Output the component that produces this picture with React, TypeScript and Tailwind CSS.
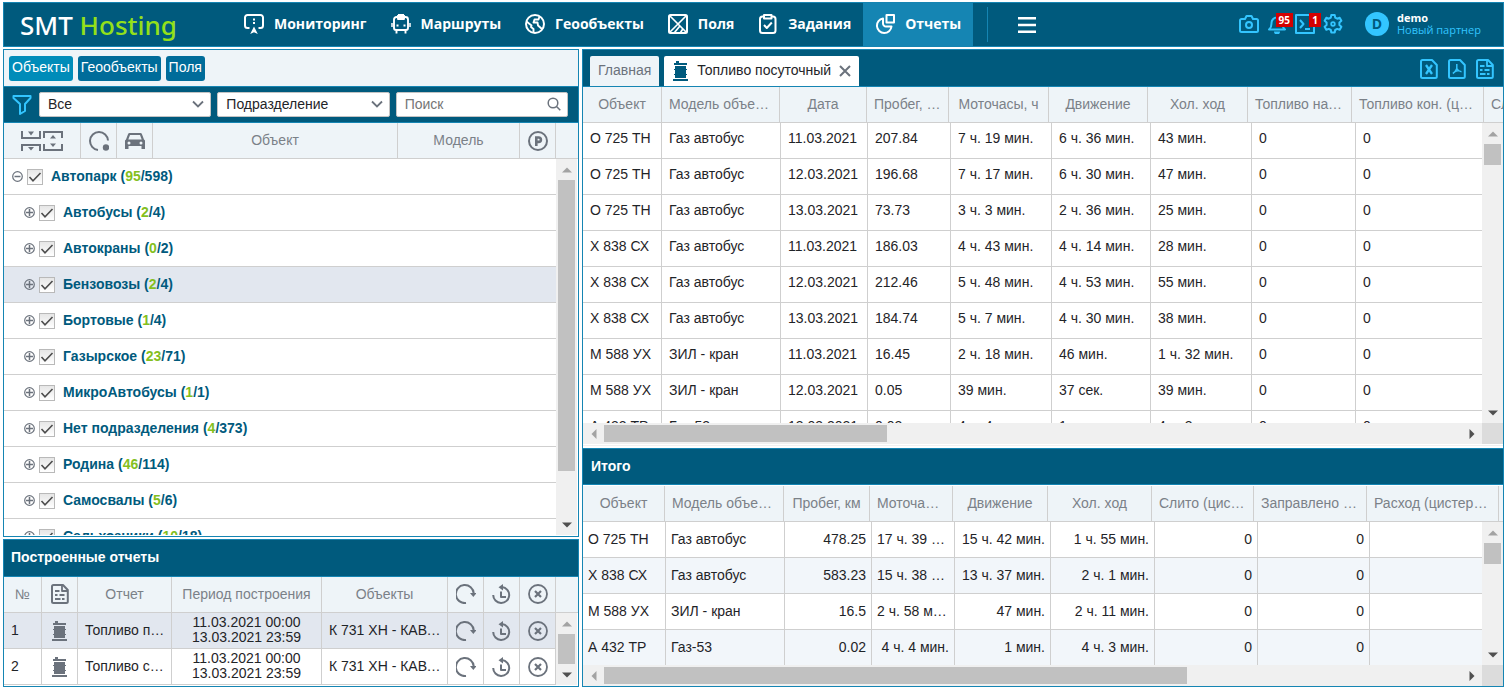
import type { ReactNode } from "react";

type IconProps = { className?: string };

function Svg({ className = "size-5", children }: { className?: string; children: ReactNode }) {
  return (
    <svg viewBox="0 0 20 20" className={`shrink-0 ${className}`} fill="none" stroke="currentColor" strokeWidth="2" strokeLinejoin="round" aria-hidden="true">
      {children}
    </svg>
  );
}

const MonitorIcon = () => (
  <Svg>
    <path d="M5.500 14H3.500A2.500 2.500 0 0 1 1 11.500V3.500A2.500 2.500 0 0 1 3.500 1h13A2.500 2.500 0 0 1 19 3.500v8a2.500 2.500 0 0 1-2.500 2.500h-2" />
    <path d="M10 4.500v2M10 8v2" />
    <path d="M10 12.500 13.800 20 10 18.300 6.200 20Z" fill="currentColor" stroke="none" />
  </Svg>
);
const BusIcon = () => (
  <Svg>
    <path d="M7 1h6M3 5.500A2.500 2.500 0 0 1 5.500 3h9A2.500 2.500 0 0 1 17 5.500V14a2 2 0 0 1-2 2H5a2 2 0 0 1-2-2ZM7 1v4h6V1M5.500 16v3.500M14.500 16v3.500" strokeWidth="1.900" />
    <path d="M1 9v4M19 9v4" strokeWidth="1.500" />
    <path d="M5.500 11.500h2M12.500 11.500h2" />
  </Svg>
);
const GlobeIcon = () => (
  <Svg>
    <circle cx="10" cy="10" r="9" />
    <path d="M1.500 7.500 6.500 11.500 6 13l2.500 2v3.500M14.500 2.500l-1 3h-4l-1 3h4l.5 3 4 3.500" strokeWidth="1.900" />
  </Svg>
);
const FieldIcon = () => (
  <Svg>
    <rect x="1" y="1" width="18" height="18" rx="1.500" />
    <path d="M2 2l16 16M18 2 2 18M6.500 18.500l5-6M12.500 18.500l2-3" strokeWidth="1.700" />
  </Svg>
);
const TaskIcon = () => (
  <Svg>
    <rect x="2" y="2.500" width="15.500" height="16.500" rx="2.500" />
    <path d="M6 1h7.500v3.500H6Z" fill="#005a7d" />
    <path d="m6 11 2.800 3 5-5.500" />
  </Svg>
);
const ReportsIcon = () => (
  <Svg>
    <path d="M8 4.500A7.300 7.300 0 1 0 16.500 12.500H11a3 3 0 0 1-3-3Z" />
    <path d="M11.500 1H19v7.500h-7.500Z" />
  </Svg>
);
const CameraIcon = () => (
  <Svg>
    <path d="M2.500 5H6l1.500-3h5L14 5h3.500A1.500 1.500 0 0 1 19 6.500v10a1.500 1.500 0 0 1-1.500 1.500h-15A1.500 1.500 0 0 1 1 16.500v-10A1.500 1.500 0 0 1 2.500 5Z" />
    <circle cx="10" cy="11" r="3" />
  </Svg>
);
const BellIcon = () => (
  <Svg>
    <path d="M2 15.500c2-1.500 2.500-3 2.500-6A5.500 5.500 0 0 1 10 3.500a5.500 5.500 0 0 1 5.500 6c0 3 .500 4.500 2.500 6Z" />
    <path d="M10 1v2" />
    <path d="M7 17.500h6a3 3 0 0 1-6 0Z" fill="currentColor" stroke="none" />
  </Svg>
);
const ConsoleIcon = () => (
  <Svg>
    <path d="M1 1h18v18H1Z" />
    <path d="m5 6 3.500 4L5 14M10 15h5" />
  </Svg>
);
const GearIcon = () => (
  <Svg>
    <path d="M8.300 1h3.400l.5 2.600 2 1.100 2.500-.9 1.700 3-2 1.700v2.600l2 1.700-1.700 3-2.500-.9-2 1.100-.5 2.600H8.300l-.5-2.600-2-1.100-2.500.9-1.700-3 2-1.700V8.500l-2-1.700 1.700-3 2.500.9 2-1.100Z" />
    <circle cx="10" cy="10" r="1.800" strokeWidth="1.800" />
  </Svg>
);
const PageIcon = ({ className, children }: { className?: string; children?: ReactNode }) => (
  <Svg className={className}>
    <path d="M3.500 1H13l4.800 5v11.500A1.500 1.500 0 0 1 16.300 19H3.500A1.500 1.500 0 0 1 2 17.500v-15A1.500 1.500 0 0 1 3.500 1Z" />
    {children}
  </Svg>
);
const ExcelIcon = () => (
  <PageIcon>
    <path d="m7 6 6 9M13 6l-6 9" strokeWidth="2.300" />
  </PageIcon>
);
const PdfIcon = () => (
  <PageIcon>
    <path d="M9.800 5v4.500c-.8 2.500-2 4-4 5M9.800 9.500c1 2 2.500 3 4.700 3.300M7.500 12.500l4-1" strokeWidth="1.500" />
  </PageIcon>
);
const DocIcon = ({ className }: IconProps) => (
  <PageIcon className={className}>
    <path d="M12 1.500V7h5.500M5 7h4.500M5 11h2.500M9.500 11h5M5 15h5.500M12 15h2.500" strokeWidth="1.800" />
  </PageIcon>
);
const FunnelIcon = () => (
  <Svg className="mr-px size-5 text-[#33c5ff]">
    <path d="M1.500 1h17v2L13 9v7l-5 3V9L1.500 3Z" />
  </Svg>
);
const BarrelIcon = ({ className }: IconProps) => (
  <svg viewBox="0 0 17 20" className={`h-5 w-[17px] shrink-0 ${className ?? ""}`} fill="currentColor" aria-hidden="true">
    <path d="M4 0h3v2h8v2H2V2h2ZM3 5h11v3h1v1h-1v4h1v1h-1v3H3v-3H2v-1h1V9H2V8h1ZM1 18h15v2H1Z" />
  </svg>
);
const TreeToggleIcon = () => (
  <svg viewBox="0 0 42 20" className="h-5 w-[42px]" fill="none" stroke="currentColor" strokeWidth="2" aria-hidden="true">
    <path d="M1 0v7h18V0M1 20v-6h18v6M23 7V1h18v6M23 13v6h18v-6" />
    <path d="M10 4.500 7 .5h6ZM10 19.500l-3-3.500h6ZM32 4l3 3.500h-6ZM32 16l3-3.500h-6Z" fill="currentColor" stroke="none" />
  </svg>
);
const StatusIcon = () => (
  <Svg>
    <path d="M9 19A9 9 0 1 1 19 9.500" />
    <circle cx="17" cy="16.500" r="3.200" fill="currentColor" stroke="none" />
  </Svg>
);
const CarIcon = () => (
  <svg viewBox="0 0 20 20" className="size-5" fill="currentColor" aria-hidden="true">
    <path fillRule="evenodd" d="M4.500 2h11a1.500 1.500 0 0 1 1.400 1L19 8.500l1 1V18h-3.500v-3h-13v3H0V9.500l1-1L3.100 3a1.500 1.500 0 0 1 1.400-1ZM5 4 3.300 8.500h13.400L15 4ZM4 10.500a1.500 1.500 0 1 0 0 3 1.500 1.500 0 0 0 0-3Zm12 0a1.500 1.500 0 1 0 0 3 1.500 1.500 0 0 0 0-3Z" />
  </svg>
);
const ParkingIcon = () => (
  <Svg>
    <circle cx="10" cy="10" r="9" />
    <path d="M8.300 15V6.500h2.400a2.200 2.200 0 0 1 0 4.400H8.300" strokeWidth="2.600" strokeLinejoin="miter" />
  </Svg>
);
const RepeatIcon = () => (
  <Svg>
    <path d="M10 19A9 9 0 1 1 17.800 9.500" />
    <path d="M14 9h6.500l-3.200 4Z" fill="currentColor" stroke="none" />
  </Svg>
);
const HistoryIcon = () => (
  <Svg>
    <path d="M10 3a8 8 0 1 1-8.800 8" />
    <path d="M11 0v6.500L6.500 3.200Z" fill="currentColor" stroke="none" />
    <path d="M9 7.500V13h5" />
  </Svg>
);
const RemoveIcon = () => (
  <Svg>
    <circle cx="10" cy="10" r="9" strokeWidth="1.800" />
    <path d="m7 7 6 6M13 7l-6 6" strokeWidth="2.200" />
  </Svg>
);

const navItems = [
  { label: "Мониторинг", icon: <MonitorIcon /> },
  { label: "Маршруты", icon: <BusIcon /> },
  { label: "Геообъекты", icon: <GlobeIcon /> },
  { label: "Поля", icon: <FieldIcon /> },
  { label: "Задания", icon: <TaskIcon /> },
  { label: "Отчеты", icon: <ReportsIcon />, active: true },
];

function Badge({ children }: { children: ReactNode }) {
  return (
    <span className="absolute -top-px -right-1.5 z-10 bg-[#d40000] px-[3px] font-['Open_Sans',sans-serif] text-[10px] leading-[14px] font-bold text-white">
      {children}
    </span>
  );
}

function Header() {
  return (
    <header className="flex h-[45px] shrink-0 items-stretch border border-[#1585b3] bg-[#005a7d] font-['Open_Sans','Noto_Sans',sans-serif] text-white">
      <a href="#" className="flex w-[228px] shrink-0 items-center pl-4 font-['Noto_Sans',sans-serif] text-[26px] leading-8 font-medium">
        <span>
          SMT <span className="text-[#93e01a]">Hosting</span>
        </span>
      </a>
      <nav className="flex items-stretch">
        {navItems.map((item) => (
          <a
            key={item.label}
            href="#"
            className={`flex items-center gap-[10px] px-3 pb-0.5 text-sm font-bold ${item.active ? "bg-[#1585b3]" : ""}`}
          >
            {item.icon}
            {item.label}
          </a>
        ))}
      </nav>
      <div className="mx-[14px] my-1 w-px bg-[#1585b3]" />
      <button type="button" aria-label="Меню" className="px-4">
        <svg viewBox="0 0 18 16" className="h-4 w-[18px]" stroke="currentColor" strokeWidth="2.400" aria-hidden="true">
          <path d="M0 1.200h18M0 8h18M0 14.800h18" />
        </svg>
      </button>
      <div className="ml-auto flex items-center gap-2 pr-[22px] pb-0.5 text-[#33c5ff]">
        <button type="button" aria-label="Снимок">
          <CameraIcon />
        </button>
        <button type="button" aria-label="Уведомления" className="relative">
          <BellIcon />
          <Badge>95</Badge>
        </button>
        <button type="button" aria-label="Команды" className="relative">
          <ConsoleIcon />
          <Badge>1</Badge>
        </button>
        <button type="button" aria-label="Настройки">
          <GearIcon />
        </button>
        <div className="ml-[14px] flex items-center gap-2">
          <span className="flex size-6 items-center justify-center rounded-full bg-[#33c5ff] text-sm font-bold text-[#005a7d]">D</span>
          <div className="text-[11px] leading-3">
            <div className="font-bold text-white">demo</div>
            <div>Новый партнер</div>
          </div>
        </div>
      </div>
    </header>
  );
}

const arrowRotation = { up: "", down: "rotate-180", left: "-rotate-90", right: "rotate-90" };

function Arrow({ dir, dim }: { dir: keyof typeof arrowRotation; dim?: boolean }) {
  return (
    <span className="flex size-[21px] shrink-0 items-center justify-center">
      <svg viewBox="0 0 10 6" className={`h-[6px] w-[10px] ${arrowRotation[dir]} ${dim ? "text-[#a3a3a3]" : "text-[#505050]"}`} fill="currentColor" aria-hidden="true">
        <path d="M5 0.500 10 5.500H0Z" />
      </svg>
    </span>
  );
}

function VScroll({ thumb }: { thumb: string }) {
  return (
    <div className="flex w-[21px] shrink-0 flex-col bg-[#f0f0f0]">
      <Arrow dir="up" dim />
      <div className="min-h-0 flex-1 px-0.5">
        <div className={`bg-[#c1c1c1] ${thumb}`} />
      </div>
      <Arrow dir="down" />
    </div>
  );
}

function HScroll({ thumb }: { thumb: string }) {
  return (
    <div className="flex h-[21px] shrink-0 bg-[#f0f0f0]">
      <Arrow dir="left" dim />
      <div className="flex-1 py-0.5">
        <div className={`h-[17px] bg-[#c1c1c1] ${thumb}`} />
      </div>
      <Arrow dir="right" />
      <div className="w-[21px] bg-[#dcdcdc]" />
    </div>
  );
}

const fieldClass = "block h-[25px] w-full appearance-none rounded-[2px] border border-[#c3c3c3] bg-white px-2 pb-0.5 text-sm leading-5 text-[#1f2428] placeholder:text-[#757575]";

function FilterSelect({ label, value }: { label: string; value: string }) {
  return (
    <div className="relative flex-1">
      <select aria-label={label} className={fieldClass} defaultValue={value}>
        <option>{value}</option>
      </select>
      <svg viewBox="0 0 12 8" className="pointer-events-none absolute top-[8px] right-[7px] h-2 w-3" fill="none" stroke="#6b727c" strokeWidth="1.800" aria-hidden="true">
        <path d="m1 1.500 5 5 5-5" />
      </svg>
    </div>
  );
}

const groups = [
  { name: "Автопарк", on: "95", total: "598", root: true },
  { name: "Автобусы", on: "2", total: "4" },
  { name: "Автокраны", on: "0", total: "2" },
  { name: "Бензовозы", on: "2", total: "4", selected: true },
  { name: "Бортовые", on: "1", total: "4" },
  { name: "Газырское", on: "23", total: "71" },
  { name: "МикроАвтобусы", on: "1", total: "1" },
  { name: "Нет подразделения", on: "4", total: "373" },
  { name: "Родина", on: "46", total: "114" },
  { name: "Самосвалы", on: "5", total: "6" },
  { name: "Сельхозники", on: "10", total: "18" },
];

function TreeRow({ group }: { group: (typeof groups)[number] }) {
  return (
    <li className={`flex h-9 items-center border-b border-[#cfcfcf] ${group.root ? "pl-2" : "pl-5"} ${group.selected ? "bg-[#e2e7ef]" : "bg-white"}`}>
      <button type="button" aria-label={group.root ? "Свернуть" : "Развернуть"} className="text-[#6b727c]">
        <svg viewBox="0 0 11 11" className="size-[11px]" fill="none" stroke="currentColor" aria-hidden="true">
          <circle cx="5.500" cy="5.500" r="4.800" strokeWidth="1.200" />
          <path d={group.root ? "M2.500 5.500h6" : "M2 5.500h7M5.500 2v7"} strokeWidth="1.500" />
        </svg>
      </button>
      <label className="ml-1 flex items-center gap-2 text-sm font-bold text-[#005a7d]">
        <span className="relative size-4">
          <input type="checkbox" defaultChecked className="peer block size-4 appearance-none border border-[#b9b9b9] bg-linear-to-b from-[#e6e6e6] to-white" />
          <svg viewBox="0 0 16 16" className="pointer-events-none absolute inset-0 hidden size-4 peer-checked:block" fill="none" stroke="#4d4d4d" strokeWidth="1.600" aria-hidden="true">
            <path d="m2.500 8 3.500 3.800L13.500 4" />
          </svg>
        </span>
        <span className="pb-0.5">
          {group.name} (<span className="text-[#84bf1e]">{group.on}</span>/{group.total})
        </span>
      </label>
    </li>
  );
}

function ObjectsPanel() {
  return (
    <section className="flex min-h-0 flex-1 flex-col border border-[#1585b3] bg-white">
      <div className="flex h-9 shrink-0 items-center gap-[5px] bg-[#eef4f8] px-[5px] text-sm text-white">
        <button type="button" className="h-[25px] rounded-[3px] bg-[#008cb9] px-[3px] pb-[3px]">Объекты</button>
        <button type="button" className="h-[25px] rounded-[3px] bg-[#006c9a] px-[3px] pb-[3px]">Геообъекты</button>
        <button type="button" className="h-[25px] rounded-[3px] bg-[#006c9a] px-[3px] pb-[3px]">Поля</button>
      </div>
      <div className="flex h-[37px] shrink-0 items-center gap-[6px] border-y border-[#1585b3] bg-[#005a7d] pr-[10px] pl-2">
        <FunnelIcon />
        <FilterSelect label="Состояние" value="Все" />
        <FilterSelect label="Группировка" value="Подразделение" />
        <div className="relative flex-1">
          <input type="text" aria-label="Поиск" placeholder="Поиск" className={fieldClass} />
          <svg viewBox="0 0 14 14" className="absolute top-[5px] right-[7px] size-[14px]" fill="none" stroke="#6b727c" strokeWidth="1.500" aria-hidden="true">
            <circle cx="6" cy="6" r="4.800" />
            <path d="m9.500 9.500 3.800 3.800" />
          </svg>
        </div>
      </div>
      <div className="flex h-9 shrink-0 items-stretch border-b border-[#cfcfcf] bg-[#eef4f8] text-sm text-[#6b727c]">
        <button type="button" className="flex w-[77px] items-center justify-center border-r border-[#cfcfcf]" aria-label="Развернуть группы">
          <TreeToggleIcon />
        </button>
        <span className="flex w-9 items-center justify-center border-r border-[#cfcfcf]">
          <StatusIcon />
        </span>
        <span className="flex w-9 items-center justify-center border-r border-[#cfcfcf]">
          <CarIcon />
        </span>
        <span className="flex flex-1 items-center justify-center border-r border-[#cfcfcf] pb-0.5 text-[#7b8188]">Объект</span>
        <span className="flex w-[122px] items-center justify-center border-r border-[#cfcfcf] pb-0.5 text-[#7b8188]">Модель</span>
        <span className="flex w-9 items-center justify-center border-r border-[#cfcfcf]">
          <ParkingIcon />
        </span>
        <span className="w-[22px]" />
      </div>
      <div className="flex min-h-0 flex-1 pr-px pb-px">
        <ul className="flex-1 overflow-hidden">
          {groups.map((g) => (
            <TreeRow key={g.name} group={g} />
          ))}
        </ul>
        <VScroll thumb="h-[87%]" />
      </div>
    </section>
  );
}

const headCell = "h-9 truncate border-r border-b border-[#cfcfcf] bg-[#eef4f8] px-[7px] pt-0 pb-0.5 text-center font-normal text-[#7b8188]";
const titleBar = "flex h-[37px] shrink-0 items-center border-[#1585b3] bg-[#005a7d] pb-0.5 text-sm font-bold text-white";

function Cols({ widths }: { widths: string[] }) {
  return (
    <colgroup>
      {widths.map((w, i) => (
        <col key={i} className={w} />
      ))}
    </colgroup>
  );
}

const builtCols = ["w-[38px]", "w-9", "w-[94px]", "w-[150px]", "w-[126px]", "w-9", "w-9", "w-9"];
const built = [
  { n: 1, name: "Топливо посуточный", objects: "К 731 ХН - КАВЗ 4235" },
  { n: 2, name: "Топливо сводный", objects: "К 731 ХН - КАВЗ 4235" },
];

function BuiltReports() {
  const cell = "h-9 truncate border-r border-b border-[#cfcfcf]";
  return (
    <section className="shrink-0 border border-[#1585b3] bg-white pb-px">
      <h2 className={`${titleBar} border-b px-[7px]`}>Построенные отчеты</h2>
      <div className="bg-[#eef4f8]">
        <table className="w-full table-fixed border-separate border-spacing-0 text-sm">
          <Cols widths={[...builtCols, "w-[22px]"]} />
          <thead>
            <tr>
              <th className={headCell}>№</th>
              <th className={headCell}><DocIcon className="mx-auto size-5 text-[#6b727c]" /></th>
              <th className={headCell}>Отчет</th>
              <th className={headCell}>Период построения</th>
              <th className={headCell}>Объекты</th>
              <th className={headCell}><span className="flex justify-center text-[#6b727c]"><RepeatIcon /></span></th>
              <th className={headCell}><span className="flex justify-center text-[#6b727c]"><HistoryIcon /></span></th>
              <th className={headCell}><span className="flex justify-center text-[#6b727c]"><RemoveIcon /></span></th>
              <th className="border-b border-[#cfcfcf] p-0" />
            </tr>
          </thead>
        </table>
      </div>
      <div className="flex pr-px">
        <div className="min-w-0 flex-1">
          <table className="w-full table-fixed border-separate border-spacing-0 text-sm text-[#1f2428]">
            <Cols widths={builtCols} />
            <tbody>
              {built.map((r) => (
                <tr key={r.n} className={r.n === 1 ? "bg-[#e2e7ef]" : "bg-white"}>
                  <td className={`${cell} px-[7px] pt-0 pb-0.5`}>{r.n}</td>
                  <td className={`${cell} p-0`}><BarrelIcon className="mx-auto text-[#6b727c]" /></td>
                  <td className={`${cell} pt-0 pr-1 pb-0.5 pl-[7px]`}>{r.name}</td>
                  <td className={`${cell} px-0 pt-0 pb-0.5 text-center leading-[15px]`}>11.03.2021 00:00<br />13.03.2021 23:59</td>
                  <td className={`${cell} pt-0 pr-1 pb-0.5 pl-[7px]`}>{r.objects}</td>
                  <td className={`${cell} p-0`}><button type="button" aria-label="Повторить" className="flex w-full justify-center text-[#6b727c]"><RepeatIcon /></button></td>
                  <td className={`${cell} p-0`}><button type="button" aria-label="История" className="flex w-full justify-center text-[#6b727c]"><HistoryIcon /></button></td>
                  <td className={`${cell} p-0`}><button type="button" aria-label="Удалить" className="flex w-full justify-center text-[#6b727c]"><RemoveIcon /></button></td>
                </tr>
              ))}
            </tbody>
          </table>
        </div>
        <VScroll thumb="h-full" />
      </div>
    </section>
  );
}

const dailyHeadCols = ["w-[79px]", "w-[118px]", "w-[87px]", "w-[82px]", "w-[100px]", "w-[99px]", "w-[100px]", "w-[104px]", "w-[132px]", "w-auto"];
const dailyHead = ["Объект", "Модель объекта", "Дата", "Пробег, км", "Моточасы, ч", "Движение", "Хол. ход", "Топливо нач. (цистерна)", "Топливо кон. (цистерна)", "Слито"];
const dailyCols = ["w-[79px]", "w-[119px]", "w-[87px]", "w-[83px]", "w-[101px]", "w-[99px]", "w-[101px]", "w-[104px]", "w-auto"];
const daily = [
  ["О 725 ТН", "Газ автобус", "11.03.2021", "207.84", "7 ч. 19 мин.", "6 ч. 36 мин.", "43 мин.", "0", "0"],
  ["О 725 ТН", "Газ автобус", "12.03.2021", "196.68", "7 ч. 17 мин.", "6 ч. 30 мин.", "47 мин.", "0", "0"],
  ["О 725 ТН", "Газ автобус", "13.03.2021", "73.73", "3 ч. 3 мин.", "2 ч. 36 мин.", "25 мин.", "0", "0"],
  ["Х 838 СХ", "Газ автобус", "11.03.2021", "186.03", "4 ч. 43 мин.", "4 ч. 14 мин.", "28 мин.", "0", "0"],
  ["Х 838 СХ", "Газ автобус", "12.03.2021", "212.46", "5 ч. 48 мин.", "4 ч. 53 мин.", "55 мин.", "0", "0"],
  ["Х 838 СХ", "Газ автобус", "13.03.2021", "184.74", "5 ч. 7 мин.", "4 ч. 30 мин.", "38 мин.", "0", "0"],
  ["М 588 УХ", "ЗИЛ - кран", "11.03.2021", "16.45", "2 ч. 18 мин.", "46 мин.", "1 ч. 32 мин.", "0", "0"],
  ["М 588 УХ", "ЗИЛ - кран", "12.03.2021", "0.05", "39 мин.", "37 сек.", "39 мин.", "0", "0"],
  ["А 432 ТР", "Газ-53", "13.03.2021", "0.02", "4 ч. 4 мин.", "1 мин.", "4 ч. 3 мин.", "0", "0"],
];

const totalHeadCols = ["w-[82px]", "w-[119px]", "w-[86px]", "w-[83px]", "w-[95px]", "w-[104px]", "w-[102px]", "w-[113px]", "w-[132px]", "w-auto"];
const totalHead = ["Объект", "Модель объекта", "Пробег, км", "Моточасы, ч", "Движение", "Хол. ход", "Слито (цистерна)", "Заправлено (цистерна)", "Расход (цистерна)", ""];
const totalCols = ["w-[83px]", "w-[119px]", "w-[87px]", "w-[83px]", "w-[96px]", "w-[104px]", "w-[103px]", "w-[112px]", "w-auto"];
const totals = [
  ["О 725 ТН", "Газ автобус", "478.25", "17 ч. 39 мин.", "15 ч. 42 мин.", "1 ч. 55 мин.", "0", "0", ""],
  ["Х 838 СХ", "Газ автобус", "583.23", "15 ч. 38 мин.", "13 ч. 37 мин.", "2 ч. 1 мин.", "0", "0", ""],
  ["М 588 УХ", "ЗИЛ - кран", "16.5", "2 ч. 58 мин.", "47 мин.", "2 ч. 11 мин.", "0", "0", ""],
  ["А 432 ТР", "Газ-53", "0.02", "4 ч. 4 мин.", "1 мин.", "4 ч. 3 мин.", "0", "0", ""],
];

function HeadTable({ widths, labels }: { widths: string[]; labels: string[] }) {
  return (
    <table className="w-full shrink-0 table-fixed border-separate border-spacing-0 text-sm">
      <Cols widths={widths} />
      <thead>
        <tr>
          {labels.map((l, i) => (
            <th key={i} className={`${headCell} last:border-r-0 last:text-clip`}>{l}</th>
          ))}
        </tr>
      </thead>
    </table>
  );
}

function ReportPanel() {
  return (
    <section className="flex min-w-0 flex-1 flex-col border border-[#1585b3] bg-white">
      <div className="flex h-[37px] shrink-0 items-end gap-[5px] border-b border-[#1585b3] bg-[#005a7d] pr-2 pl-[7px] text-sm">
        <button type="button" className="h-[30px] rounded-t-[2px] bg-[#eef4f8] px-2 pb-0.5 text-[#6b727c]">Главная</button>
        <div className="flex h-[30px] items-center rounded-t-[2px] bg-white px-2">
          <BarrelIcon className="text-[#005a7d]" />
          <button type="button" className="ml-2 pb-0.5 text-[#1f2428]">Топливо посуточный</button>
          <button type="button" aria-label="Закрыть" className="ml-2 text-[#6b727c]">
            <svg viewBox="0 0 12 12" className="size-3" stroke="currentColor" strokeWidth="2" aria-hidden="true">
              <path d="m1 1 10 10M11 1 1 11" />
            </svg>
          </button>
        </div>
        <div className="mb-[7px] ml-auto flex gap-2 text-[#33c5ff]">
          <button type="button" aria-label="Excel"><ExcelIcon /></button>
          <button type="button" aria-label="PDF"><PdfIcon /></button>
          <button type="button" aria-label="Отчет"><DocIcon /></button>
        </div>
      </div>
      <HeadTable widths={dailyHeadCols} labels={dailyHead} />
      <div className="flex min-h-0 flex-1">
        <div className="min-w-0 flex-1 overflow-hidden">
          <table className="w-full table-fixed border-separate border-spacing-0 text-sm text-[#1f2428]">
            <Cols widths={dailyCols} />
            <tbody>
              {daily.map((row, r) => (
                <tr key={r}>
                  {row.map((v, c) => (
                    <td key={c} className="h-9 truncate border-r border-b border-[#cfcfcf] px-[7px] pt-0 pb-1.5 last:border-r-0">{v}</td>
                  ))}
                </tr>
              ))}
            </tbody>
          </table>
        </div>
        <VScroll thumb="h-[21px]" />
      </div>
      <HScroll thumb="w-[33%]" />
      <div className="mt-px mb-0.5 h-px shrink-0 bg-[#f0f0f0]" />
      <h2 className={`${titleBar} border-y px-2`}>Итого</h2>
      <div className="mt-px shrink-0">
        <HeadTable widths={totalHeadCols} labels={totalHead} />
        <div className="flex h-[143px]">
          <div className="min-w-0 flex-1 overflow-hidden">
            <table className="w-full table-fixed border-separate border-spacing-0 text-sm text-[#1f2428]">
              <Cols widths={totalCols} />
              <tbody>
                {totals.map((row, r) => (
                  <tr key={r} className="even:bg-[#f2f6fa]">
                    {row.map((v, c) => (
                      <td key={c} className={`h-9 truncate border-r border-b border-[#cfcfcf] px-[5px] pt-0 pb-0.5 last:border-r-0 ${c > 1 ? "text-right" : ""}`}>{v}</td>
                    ))}
                  </tr>
                ))}
              </tbody>
            </table>
          </div>
          <VScroll thumb="h-[21px]" />
        </div>
        <HScroll thumb="w-[68%]" />
      </div>
    </section>
  );
}

export default function App() {
  return (
    <div className="flex h-screen flex-col gap-0.5 overflow-hidden bg-white pt-0.5 pr-px pb-0.5 pl-[3px] font-['Liberation_Sans',Arial,sans-serif]">
      <Header />
      <main className="flex min-h-0 flex-1 gap-[3px]">
        <div className="flex w-[576px] shrink-0 flex-col gap-0.5">
          <ObjectsPanel />
          <BuiltReports />
        </div>
        <ReportPanel />
      </main>
    </div>
  );
}
